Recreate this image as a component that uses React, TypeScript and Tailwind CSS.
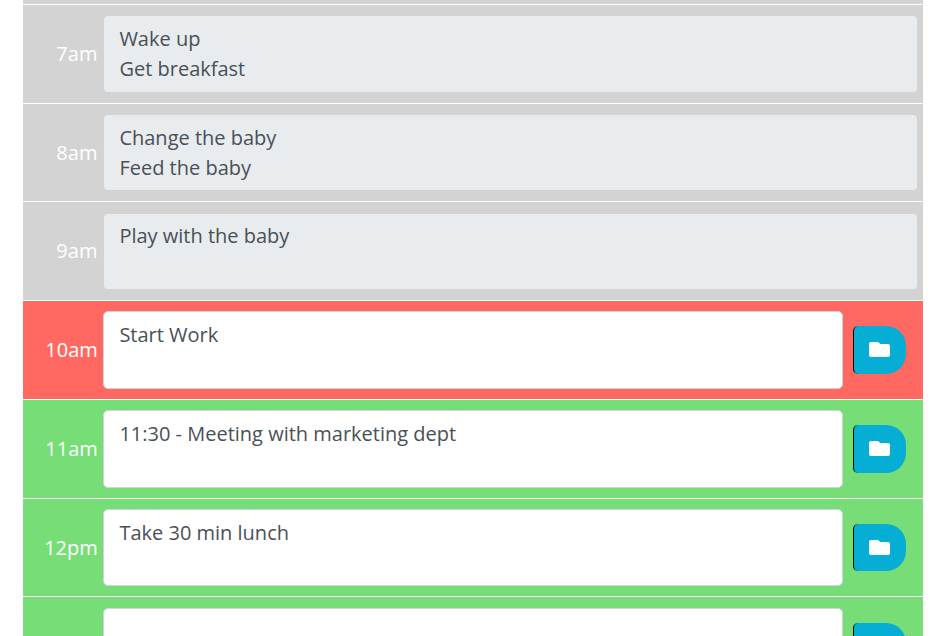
type Row = { time: string; text: string; kind: "past" | "present" | "future"; row: string; box: string; button?: string };

const rows: Row[] = [
  { time: "7am", text: "Wake up\nGet breakfast", kind: "past", row: "h-[99px]", box: "mt-[11px] h-[76px] pt-[8px]" },
  { time: "8am", text: "Change the baby\nFeed the baby", kind: "past", row: "h-[98px]", box: "mt-[11px] h-[75px] pt-[8px]" },
  { time: "9am", text: "Play with the baby", kind: "past", row: "h-[99px]", box: "mt-[12px] h-[75px] pt-[7px]" },
  { time: "10am", text: "Start Work", kind: "present", row: "h-[99px]", box: "mt-[10px] h-[78px]", button: "mt-[25px] h-[48px]" },
  { time: "11am", text: "11:30 - Meeting with marketing dept", kind: "future", row: "h-[99px]", box: "mt-[10px] h-[78px]", button: "mt-[25px] h-[48px]" },
  { time: "12pm", text: "Take 30 min lunch", kind: "future", row: "h-[98px]", box: "mt-[10px] h-[77px]", button: "mt-[25px] h-[47px]" },
  { time: "", text: "", kind: "future", row: "h-[99px]", box: "mt-[11px] h-[78px]", button: "mt-[26px] h-[48px]" },
];

const background = { past: "bg-[#d3d3d3]", present: "bg-[#ff6961]", future: "bg-[#77dd77]" };

function FolderIcon() {
  return (
    <svg width="21" height="15" viewBox="0 0 21 15" fill="currentColor">
      <path d="M2 0H8.600Q9.300 0 9.800 .5L11.200 2H19Q21 2 21 4V13Q21 15 19 15H2Q0 15 0 13V2Q0 0 2 0Z" />
    </svg>
  );
}

export default function App() {
  return (
    <div className="h-[636px] overflow-hidden bg-white pl-[23px] pr-[20px] font-['Open_Sans',sans-serif] text-[20px] leading-[30px]">
      <div className="h-1 bg-[#d3d3d3]" />
      {rows.map((r, i) => (
        <div key={i} className={`flex items-start border-t border-white ${r.row} ${background[r.kind]}`}>
          <div className={`mt-[34px] w-20 shrink-0 text-right text-white ${r.kind === "past" ? "pr-[5.6px]" : "pr-[5.2px]"}`}>{r.time}</div>
          {r.kind === "past" ? (
            <div className={`ml-px mr-[6px] flex-1 whitespace-pre-line rounded-[4px] bg-[#e8ecef] pl-[15.4px] text-[#495057] ${r.box}`}>{r.text}</div>
          ) : (
            <>
              <div className={`w-[740px] whitespace-pre-line rounded-[5px] border border-[#ced4da] bg-white pl-[15.4px] pt-[8px] text-[#495057] ${r.box}`}>{r.text}</div>
              <button className={`ml-[10px] flex w-[53px] items-start rounded-l-[5px] rounded-r-[20px] border-l border-black bg-[#06aed5] pl-[15px] pt-[16px] text-white ${r.button}`}>
                <FolderIcon />
              </button>
            </>
          )}
        </div>
      ))}
    </div>
  );
}
